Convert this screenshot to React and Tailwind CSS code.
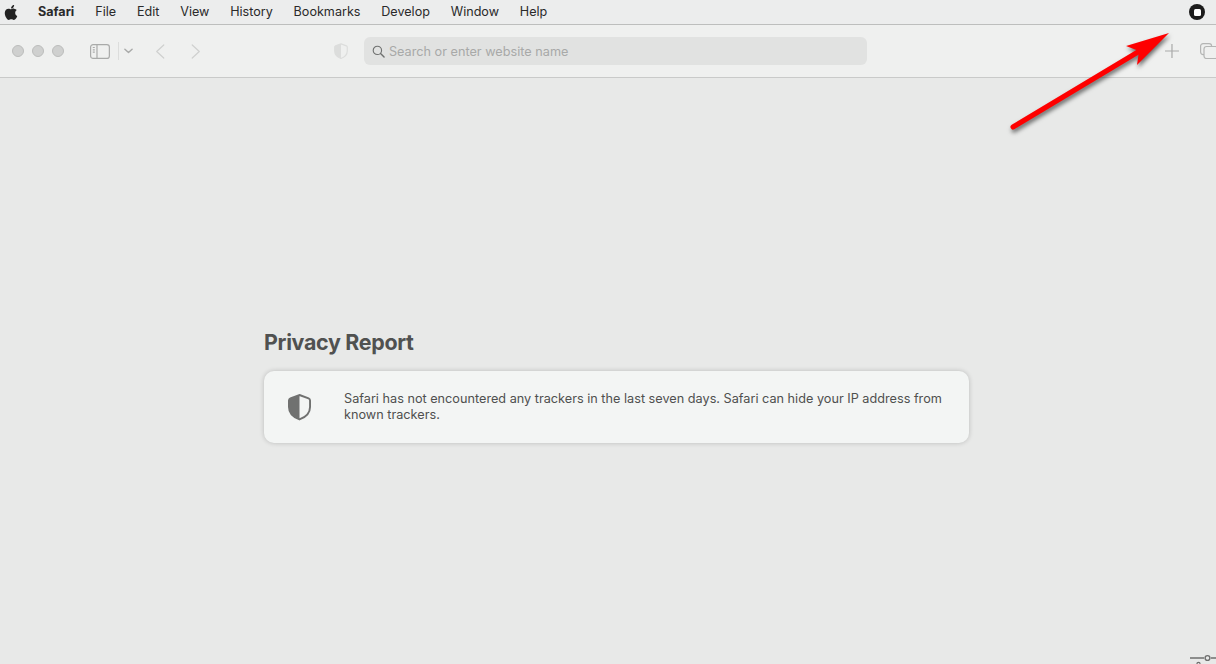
import React from 'react'

const menuItems = ['File', 'Edit', 'View', 'History', 'Bookmarks', 'Develop', 'Window', 'Help']

function AppleLogo() {
  return (
    <svg viewBox="0 0 384 512" className="w-[14px] h-[17px] text-[#222]" fill="currentColor">
      <path d="M318.7 268.7c-.2-36.7 16.4-64.4 50-84.8-18.8-26.9-47.2-41.7-84.7-44.6-35.5-2.8-74.3 20.7-88.5 20.7-15 0-49.4-19.7-76.4-19.7C63.3 141.2 4 184.8 4 273.5q0 39.3 14.4 81.2c12.8 36.7 59 126.7 107.2 125.2 25.2-.6 43-17.9 75.8-17.9 31.8 0 48.3 17.9 76.4 17.9 48.6-.7 90.4-82.5 102.6-119.3-65.2-30.7-61.7-90-61.7-91.9zm-56.6-164.2c27.3-32.4 24.8-61.9 24-72.5-24.1 1.4-52 16.4-67.9 34.9-17.5 19.8-27.8 44.3-25.6 71.9 26.1 2 49.9-11.4 69.5-34.3z" />
    </svg>
  )
}

function ShieldIcon({ className, dark, light }) {
  return (
    <svg viewBox="0 0 24 28" className={className}>
      <path d="M12 1.5 L21.5 5 Q23 5.6 23 7.2 V14 C23 20.5 18 24.8 12 27 C6 24.8 1 20.5 1 14 V7.2 Q1 5.6 2.5 5 Z" fill={light} stroke={dark} strokeWidth="2" />
      <path d="M12 1.5 V27 C6 24.8 1 20.5 1 14 V7.2 Q1 5.6 2.5 5 Z" fill={dark} />
    </svg>
  )
}

function SearchIcon() {
  return (
    <svg viewBox="0 0 14 14" className="w-[13px] h-[13px]" fill="none" stroke="#6f7170" strokeWidth="1.2" strokeLinecap="round">
      <circle cx="5.8" cy="5.8" r="4.5" />
      <path d="M9.2 9.2 L13 13" strokeWidth="1.5" />
    </svg>
  )
}

function Toolbar() {
  return (
    <div className="h-[53px] bg-[#eff0ef] border-b border-[#c9cac9] flex items-center relative overflow-hidden">
      <div className="flex items-center gap-2 ml-3">
        <div className="w-3 h-3 rounded-full bg-[#cfd0cf] border border-[#bcbdbc]"></div>
        <div className="w-3 h-3 rounded-full bg-[#cfd0cf] border border-[#bcbdbc]"></div>
        <div className="w-3 h-3 rounded-full bg-[#cfd0cf] border border-[#bcbdbc]"></div>
      </div>

      <svg viewBox="0 0 20 15" className="w-5 h-[15px] ml-[26px]" fill="none" stroke="#a9aaa9" strokeWidth="1.2">
        <rect x="0.6" y="0.6" width="18.8" height="13.8" rx="2.5" />
        <path d="M7 0.6 V14.4" />
        <path d="M2.8 3.5 H4.8 M2.8 5.8 H4.8 M2.8 8.1 H4.8" />
      </svg>
      <div className="w-px h-[18px] bg-[#dcdddc] ml-[8px]"></div>
      <svg viewBox="0 0 10 6" className="w-[9px] h-[6px] ml-[5px]" fill="none" stroke="#a9aaa9" strokeWidth="1.6" strokeLinecap="round" strokeLinejoin="round">
        <path d="M1 1 L5 4.6 L9 1" />
      </svg>
      <svg viewBox="0 0 10 16" className="w-[10px] h-[15px] ml-[22px]" fill="none" stroke="#cfd0cf" strokeWidth="1.3" strokeLinecap="round" strokeLinejoin="round">
        <path d="M9 1 L1.5 8 L9 15" />
      </svg>
      <svg viewBox="0 0 10 16" className="w-[10px] h-[15px] ml-[26px]" fill="none" stroke="#cfd0cf" strokeWidth="1.3" strokeLinecap="round" strokeLinejoin="round">
        <path d="M1 1 L8.5 8 L1 15" />
      </svg>

      <ShieldIcon className="w-[14px] h-[16px] ml-[133px]" dark="#dcdddc" light="#eff0ef" />

      <div className="w-[504px] h-7 ml-[16px] rounded-[6px] bg-[#e1e2e1] flex items-center pl-2 gap-[4px]">
        <SearchIcon />
        <span className="text-[12.7px] leading-[16px] pt-[1px] text-[#a8a9a8]">Search or enter website name</span>
      </div>

      <svg viewBox="0 0 14 14" className="w-[14px] h-[14px] ml-[298px]" fill="none" stroke="#a9aaa9" strokeWidth="1.2">
        <path d="M7 0 V14 M0 7 H14" />
      </svg>
      <svg viewBox="0 0 16 16" className="w-4 h-4 ml-[21px] shrink-0" fill="none" stroke="#b4b5b4" strokeWidth="1.2">
        <rect x="0.6" y="0.6" width="11" height="11" rx="2.5" />
        <rect x="4" y="3.5" width="14" height="12" rx="2.5" fill="#eff0ef" />
      </svg>
    </div>
  )
}

export default function App() {
  return (
    <div className="w-[1216px] h-[664px] relative overflow-hidden bg-[#e8e9e8] font-['Inter',sans-serif]">
      {/* Menu bar */}
      <div className="h-[25px] bg-[#eceded] border-b border-[#bdbebd] flex items-center text-[12.6px] text-[#2a2a2a]">
        <div className="ml-[4px] w-[34px] flex">
          <AppleLogo />
        </div>
        <span className="font-bold mr-[21px]">Safari</span>
        <div className="flex items-center gap-[20.8px]">
          {menuItems.map((item) => (
            <span key={item}>{item}</span>
          ))}
        </div>
        <div className="ml-auto mr-[11px] w-4 h-4 rounded-full bg-[#1c1c1c] flex items-center justify-center">
          <div className="w-[7px] h-[7px] rounded-[1.5px] bg-white"></div>
        </div>
      </div>

      <Toolbar />

      {/* Privacy report */}
      <div className="w-[705px] ml-[264px] pt-[251px]">
        <h1 className="text-[21.4px] leading-[26px] font-bold text-[#505150] tracking-[-0.3px]">Privacy Report</h1>
        <div className="mt-[16px] h-[72px] rounded-[10px] bg-[#f3f5f4] shadow-[0_0_5px_rgba(0,0,0,0.2)] flex items-center pl-[24px] pr-[20px]">
          <ShieldIcon className="w-[23px] h-[28px] shrink-0" dark="#707170" light="#f3f5f4" />
          <p className="ml-[33px] text-[12.7px] leading-[16px] text-[#4f504f]">
            Safari has not encountered any trackers in the last seven days. Safari can hide your IP address from known trackers.
          </p>
        </div>
      </div>

      {/* Annotation arrow */}
      <svg className="absolute left-[1000px] top-[20px] w-[190px] h-[125px]" viewBox="0 0 190 125" style={{ filter: 'drop-shadow(1px 3px 2px rgba(0,0,0,0.55))' }}>
        <path d="M13 107 L143 29" stroke="#fe0000" strokeWidth="5" strokeLinecap="round" fill="none" />
        <path d="M169 13 L126 26 L139 31 L137 45 Z" fill="#fe0000" />
      </svg>

      {/* Slider icon cut off at the corner */}
      <svg className="absolute left-[1190px] top-[652px] w-[26px] h-[12px]" viewBox="0 0 26 12" fill="none" stroke="#6e6f6e">
        <path d="M0 6 H14 M21 6 H26" strokeWidth="1.6" />
        <circle cx="17.5" cy="6" r="2.4" strokeWidth="1.4" />
        <circle cx="8.5" cy="12" r="1.6" strokeWidth="1.2" />
      </svg>
    </div>
  )
}
